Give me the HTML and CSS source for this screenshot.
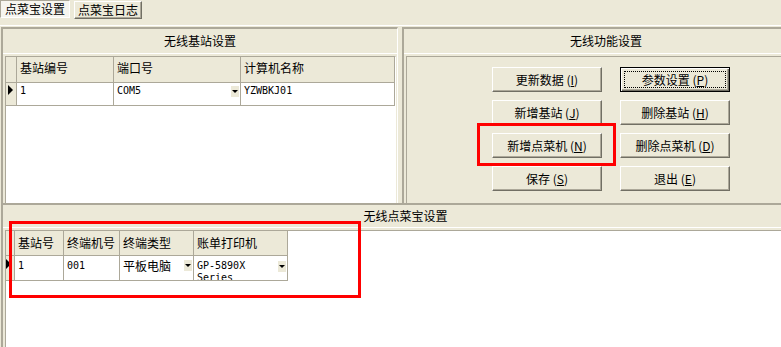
FILE: index.html
```html
<!DOCTYPE html>
<html lang="zh-CN">
<head>
<meta charset="utf-8">
<title>点菜宝设置</title>
<link rel="stylesheet" href="styles.css">
</head>
<body>
<div class="app">
  <div class="tabs">
    <div class="tab tab-on">点菜宝设置</div>
    <div class="tab tab-off">点菜宝日志</div>
  </div>
  <div class="page">
    <div class="upper">
      <section class="panel panel-left">
        <div class="cap">无线基站设置</div>
        <div class="well well-white">
          <div class="row g1 hd">
            <div class="c"></div>
            <div class="c">基站编号</div>
            <div class="c">端口号</div>
            <div class="c">计算机名称</div>
          </div>
          <div class="row g1 dt">
            <div class="c ind"><i class="tri"></i></div>
            <div class="c mono">1</div>
            <div class="c mono drop"><span>COM5</span><i class="dd"></i></div>
            <div class="c mono">YZWBKJ01</div>
          </div>
        </div>
      </section>
      <section class="panel panel-right">
        <div class="cap">无线功能设置</div>
        <div class="well">
          <div class="btns">
            <div class="btn">更新数据 (<u>I</u>)</div>
            <div class="btn btn-def"><span class="focus">参数设置 (<u>P</u>)</span></div>
            <div class="btn">新增基站 (<u>J</u>)</div>
            <div class="btn">删除基站 (<u>H</u>)</div>
            <div class="btn">新增点菜机 (<u>N</u>)</div>
            <div class="btn">删除点菜机 (<u>D</u>)</div>
            <div class="btn">保存 (<u>S</u>)</div>
            <div class="btn">退出 (<u>E</u>)</div>
          </div>
        </div>
      </section>
    </div>
    <section class="panel panel-bottom">
      <div class="cap cap-b">无线点菜宝设置</div>
      <div class="well well-white well-b">
        <div class="row g2 hd">
          <div class="c"></div>
          <div class="c">基站号</div>
          <div class="c">终端机号</div>
          <div class="c">终端类型</div>
          <div class="c">账单打印机</div>
        </div>
        <div class="row g2 dt">
          <div class="c ind"><i class="tri"></i></div>
          <div class="c mono">1</div>
          <div class="c mono">001</div>
          <div class="c drop"><span>平板电脑</span><i class="dd"></i></div>
          <div class="c mono drop"><span>GP-5890X Series</span><i class="dd"></i></div>
        </div>
      </div>
    </section>
  </div>
  <div class="mark mark-grid"></div>
  <div class="mark mark-btn"></div>
</div>
</body>
</html>
```

FILE: styles.css
```css
* { box-sizing: border-box; }
html, body { margin: 0; padding: 0; }
body {
  width: 781px;
  height: 347px;
  overflow: hidden;
  background: #ECE9D8;
  color: #000;
  font-family: "Noto Sans CJK SC", "Liberation Sans", sans-serif;
  font-size: 12px;
}
.app { position: relative; width: 808px; height: 347px; }

/* tabs */
.tabs { display: flex; align-items: flex-start; gap: 4px; height: 25px; }
.tab {
  height: 18px;
  line-height: 16px;
  border: 1px solid;
  text-align: center;
  white-space: nowrap;
}
.tab-on {
  width: 70px;
  background: #F6F5EF;
  border-color: #ACA899 #fff #fff #ACA899;
}
.tab-off {
  width: 68px;
  margin-top: 1px;
  border-color: #fff #716F64 #716F64 #fff;
  box-shadow: inset -1px -1px #ACA899;
}

/* page */
.page { border-top: 1px solid #fff; padding-top: 1px; }
.upper { display: flex; gap: 4px; height: 176px; }
.panel {
  display: flex;
  flex-direction: column;
  border-top: 2px solid #ACA899;
  border-left: 2px solid #ACA899;
}
.panel-left { margin-left: 1px; width: 397px; border-right: 1px solid #fff; }
.panel-right { width: 406px; }
.panel-bottom { margin-left: 1px; height: 144px; }

.cap {
  flex: none;
  height: 25px;
  line-height: 24px;
  text-align: center;
  border-bottom: 1px solid #fff;
  margin-bottom: 2px;
}
.cap-b { height: 23px; line-height: 22px; }

.well {
  flex: 1;
  margin: 0 1px 0 2px;
  border-top: 1px solid #ACA899;
  border-left: 1px solid #ACA899;
  border-right: 1px solid #fff;
}
.well-white { background: #fff; }
.well-b { margin-right: 0; }

/* grids */
.row { display: grid; }
.g1 { grid-template-columns: 11px 97px 127px 154px; width: 389px; }
.g2 { grid-template-columns: 9px 49px 56px 74px 94px; width: 282px; }
.c {
  border-right: 1px solid #ACA899;
  border-bottom: 1px solid #ACA899;
  padding: 4px 0 0 3px;
  overflow: hidden;
  line-height: 14px;
  white-space: nowrap;
}
.hd .c { background: #ECE9D8; }
.g1.hd .c { height: 26px; }
.g2.hd .c { height: 25px; padding-top: 5px; }
.g1.dt .c { height: 23px; padding-top: 2px; }
.g2.dt .c { height: 25px; padding-top: 3px; }
.mono {
  font-family: "DejaVu Sans Mono", "Liberation Mono", monospace;
  font-size: 10px;
  line-height: 12px;
}
.g2.dt .mono { padding-top: 4px; }
.c.ind { background: #ECE9D8; padding: 5px 0 0 2px; }
.g2 .c.ind { padding-left: 0; }
.tri {
  display: block;
  width: 0;
  height: 0;
  border-left: 5px solid #000;
  border-top: 5px solid transparent;
  border-bottom: 5px solid transparent;
}
.drop {
  display: flex;
  justify-content: space-between;
  align-items: flex-start;
  padding-right: 1px;
}
.drop span { white-space: normal; }
.g2 .drop.mono span { width: 72px; }
.dd {
  flex: none;
  width: 8px;
  height: 11px;
  margin-top: 1px;
  background: #ECE9D8;
  display: flex;
  align-items: center;
  justify-content: center;
}
.dd::after {
  content: "";
  border-top: 3px solid #000;
  border-left: 3px solid transparent;
  border-right: 3px solid transparent;
}

/* buttons */
.btns {
  display: grid;
  grid-template-columns: 110px 110px;
  column-gap: 18px;
  row-gap: 8px;
  padding: 10px 0 0 85px;
}
.btn {
  height: 25px;
  border: 1px solid;
  border-color: #fff #716F64 #716F64 #fff;
  box-shadow: inset -1px -1px #ACA899;
  display: flex;
  align-items: center;
  justify-content: center;
  white-space: nowrap;
}
.btn u { text-decoration: underline; text-underline-offset: 1px; }
.btn-def {
  border: 1px solid #000;
  box-shadow: inset 1px 1px #fff, inset -1px -1px #716F64, inset -2px -2px #ACA899;
  padding: 3px 3px;
}
.focus {
  flex: 1;
  align-self: stretch;
  border: 1px dotted #000;
  display: flex;
  align-items: center;
  justify-content: center;
}

/* red annotation boxes */
.mark { position: absolute; border: 3px solid #f00; }
.mark-grid { left: 9px; top: 221px; width: 352px; height: 77px; }
.mark-btn { left: 477px; top: 123px; width: 139px; height: 43px; }
```
